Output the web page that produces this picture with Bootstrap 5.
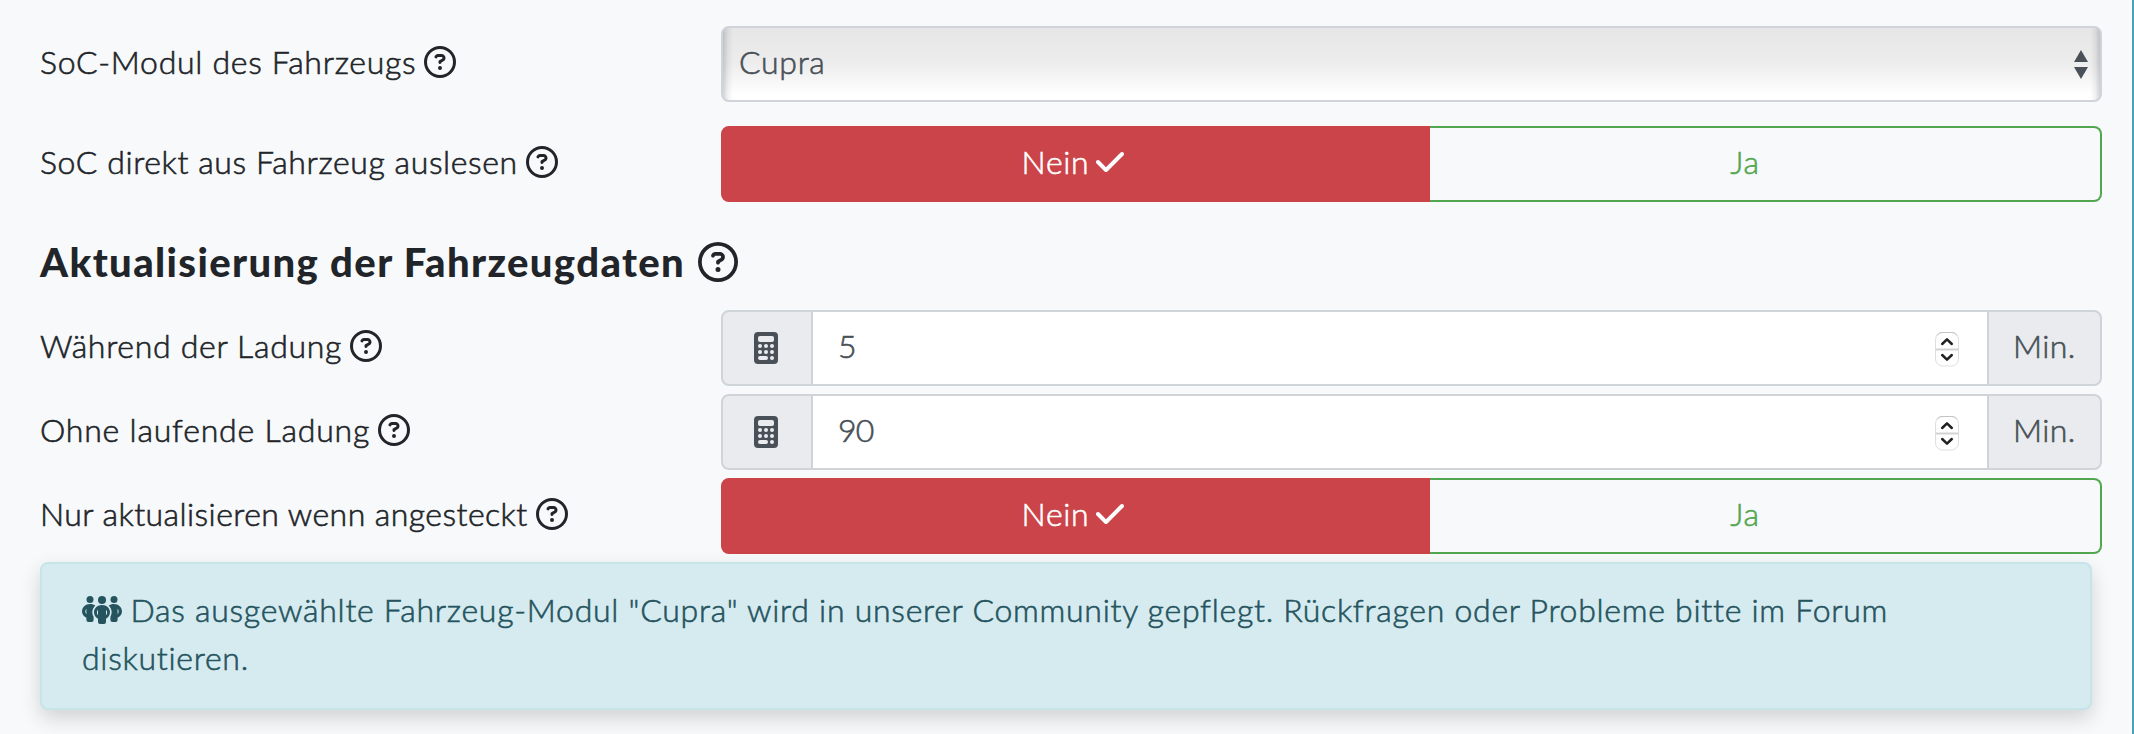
<!DOCTYPE html>
<html lang="de">
<head>
<meta charset="utf-8">
<meta name="viewport" content="width=device-width, initial-scale=1">
<title>Fahrzeug-Einstellungen</title>
<link href="https://cdn.jsdelivr.net/npm/bootstrap@5.3.0/dist/css/bootstrap.min.css" rel="stylesheet">
<style>
html, body { height: 734px; overflow: hidden; }
body {
  background: #f8f9fb;
  color: #212529;
  font: 300 32px/48px Lato, "Open Sans", sans-serif;
  letter-spacing: .7px;
  -webkit-text-stroke: .6px currentColor;
}
.settings { height: 734px; padding: 26px 30px 0 40px; border-right: 2px solid #4a9fb9; }
.setting { height: 76px; }
.setting-label { flex: 0 0 681px; padding: 12px 0 16px; white-space: nowrap; }
.label-tight { letter-spacing: .6px; }
.label-tighter { letter-spacing: .44px; }
.label-wide { letter-spacing: .8px; }
.ico { height: 32px; width: auto; fill: currentColor; flex: none; vertical-align: -4px; -webkit-text-stroke: 0; }
.setting-label .ico { margin-left: 8px; }
.setting-heading { font-size: 40px; font-weight: 900; line-height: 48px; letter-spacing: 1.38px; height: 48px; -webkit-text-stroke: 0; white-space: nowrap; }
.setting-heading .ico { height: 40px; margin-left: 13px; vertical-align: -5px; }
.form-select.module-select {
  height: 76px; font: inherit; letter-spacing: inherit; color: #495057;
  padding: 10px 40px 16px 16px; border: 2px solid #ced4da; border-radius: 8px;
  background:
    url("data:image/svg+xml,%3csvg xmlns='http://www.w3.org/2000/svg' viewBox='0 0 14 30'%3e%3cpath fill='%23495057' d='M0 12 7 0l7 12zM0 17h14L7 29z'/%3e%3c/svg%3e") right 12px top 22px / 14px 30px no-repeat,
    linear-gradient(to right, rgba(0,0,0,.17), rgba(0,0,0,.05) 5px, transparent 10px),
    linear-gradient(to left, rgba(0,0,0,.17), rgba(0,0,0,.05) 5px, transparent 10px),
    linear-gradient(#e6e6e6, #ededed 50%, #fff 92%);
}
.btn-group .btn {
  font: inherit; letter-spacing: inherit; height: 76px; padding: 10px 0 14px;
  border-width: 2px; border-radius: 8px; white-space: nowrap;
}
.btn-group .btn-no { flex: 0 0 709px; background: #cb444a; border-color: #cb444a; color: #fff; padding-right: 5px; }
.btn-group .btn-yes { flex: 1 1 0; border-color: #52a650; color: #52a650; border-left: 0; margin-left: 0 !important; padding-right: 5px; }
.btn .ico { margin-left: 7px; }
.input-group.minutes > * { font: inherit; letter-spacing: inherit; color: #495057; height: 76px; border: 2px solid #ced4d8; border-radius: 8px; margin-left: 0 !important; }
.minutes .addon-calc { width: 92px; background: #e9ebef; justify-content: center; padding: 0 2px 0 0; }
.input-group.minutes .value-box { border-left: 0; border-right: 0; padding: 10px 28px 14px 25px; background: #fff; }
.minutes .addon-unit { width: 115px; background: #e9ebef; padding: 10px 0 14px 24px; letter-spacing: .4px; }
.spinner-arrows { width: 28px; height: 38px; margin: 8px -2px 0 0; }
.community {
  width: 2052px; height: 148px; margin: 8px 0 0; padding: 22px 40px 24px;
  background: #d6ebef; border: 2px solid #c6e5ea; border-radius: 8px; color: #25545f;
  letter-spacing: .73px;
  box-shadow: 0 8px 20px rgba(0,0,0,.16);
}
.community .ico { height: 32px; width: 40px; margin-right: -1px; }
</style>
</head>
<body>
<svg class="d-none" xmlns="http://www.w3.org/2000/svg">
  <symbol id="help" viewBox="0 0 512 512"><path d="M464 256A208 208 0 1 0 48 256a208 208 0 1 0 416 0zM0 256a256 256 0 1 1 512 0A256 256 0 1 1 0 256zm169.800-90.700c7.900-22.300 29.100-37.300 52.800-37.300h58.300c34.900 0 63.100 28.300 63.100 63.100c0 22.600-12.100 43.500-31.700 54.800L280 264.400c-.2 13-10.900 23.600-24 23.600c-13.300 0-24-10.700-24-24V250.500c0-8.600 4.600-16.500 12.100-20.800l44.300-25.400c4.700-2.700 7.600-7.700 7.600-13.100c0-8.400-6.800-15.100-15.100-15.100H222.600c-3.400 0-6.400 2.100-7.500 5.300l-.4 1.200c-4.400 12.500-18.200 19-30.600 14.600s-19-18.200-14.600-30.600l.4-1.200zM224 352a32 32 0 1 1 64 0 32 32 0 1 1-64 0z"/></symbol>
  <symbol id="check" viewBox="0 0 448 512"><path d="M438.600 105.400c12.500 12.500 12.500 32.800 0 45.300l-256 256c-12.500 12.500-32.800 12.500-45.300 0l-128-128c-12.500-12.500-12.500-32.800 0-45.300s32.800-12.500 45.300 0L160 338.700 393.400 105.400c12.500-12.500 32.800-12.500 45.300 0z"/></symbol>
  <symbol id="calc" viewBox="0 0 24 32"><rect width="24" height="32" rx="4"/><g fill="#e9ebef"><rect x="4" y="4" width="16" height="6" rx="2"/><circle cx="6" cy="14" r="2"/><circle cx="12" cy="14" r="2"/><circle cx="18" cy="14" r="2"/><circle cx="6" cy="20" r="2"/><circle cx="12" cy="20" r="2"/><circle cx="18" cy="20" r="2"/><rect x="4" y="24" width="10" height="4" rx="2"/><circle cx="18" cy="26" r="2"/></g></symbol>
  <symbol id="people" viewBox="0 0 40 32"><circle cx="8" cy="5.500" r="3.500"/><circle cx="32" cy="5.500" r="3.500"/><circle cx="20" cy="6" r="4"/><path fill-rule="evenodd" d="M8 10c2.200 0 4 .5 5.300 1.600-3 3-4 7.400-1.700 11.200V26a2 2 0 0 1-2 2H6.400a2 2 0 0 1-2-2v-2.300C1.500 22.300 0 20 0 17.500 0 13.400 3.500 10 8 10zM4.400 14.800c-1.400 1.500-1.400 3.900 0 5.400z"/><path fill-rule="evenodd" d="M32 10c-2.200 0-4 .5-5.300 1.600 3 3 4 7.400 1.700 11.200V26a2 2 0 0 0 2 2h3.200a2 2 0 0 0 2-2v-2.300c2.900-1.400 4.400-3.700 4.400-6.200C40 13.400 36.500 10 32 10zm3.600 4.800c1.400 1.500 1.400 3.900 0 5.400z"/><path fill-rule="evenodd" d="M20 11c4.600 0 8 3.100 8 7.300 0 2.700-1.500 5-4 6.400V28a2 2 0 0 1-2 2h-4a2 2 0 0 1-2-2v-3.300c-2.500-1.400-4-3.700-4-6.400 0-4.200 3.400-7.300 8-7.300zm-4 4.800c-1.500 1.500-1.500 4 0 5.500zm8 0v5.500c1.500-1.500 1.500-4 0-5.500z"/></symbol>
  <symbol id="spin" viewBox="0 0 28 38"><rect x="2.500" y="2.500" width="23" height="33.500" rx="7" fill="#fff" stroke="#dedede"/><path d="M4 5.500C5 3.500 7 2.500 9 2.500h10c2 0 4 1 5 3" fill="none" stroke="#c4c4c4"/><path d="M2.500 19.500h23" stroke="#d2d2d2" stroke-width="2"/><path d="M9.200 14 14 9.400l4.800 4.600M9.200 25l4.800 4.600 4.800-4.600" fill="none" stroke="#212121" stroke-width="2.500" stroke-linecap="round" stroke-linejoin="round"/></symbol>
</svg>

<main class="settings">
  <div class="setting d-flex">
    <label class="setting-label" for="module">SoC-Modul des Fahrzeugs<svg class="ico" viewBox="0 0 512 512"><use href="#help"/></svg></label>
    <select class="form-select module-select" id="module"><option>Cupra</option></select>
  </div>

  <div class="setting d-flex mt-4">
    <div class="setting-label label-tight">SoC direkt aus Fahrzeug auslesen<svg class="ico" viewBox="0 0 512 512"><use href="#help"/></svg></div>
    <div class="btn-group flex-fill">
      <button type="button" class="btn btn-no">Nein<svg class="ico" viewBox="0 0 448 512"><use href="#check"/></svg></button>
      <button type="button" class="btn btn-yes">Ja<svg class="ico invisible" viewBox="0 0 448 512"><use href="#check"/></svg></button>
    </div>
  </div>

  <h2 class="setting-heading" style="margin:36px 0 24px">Aktualisierung der Fahrzeugdaten<svg class="ico" viewBox="0 0 512 512"><use href="#help"/></svg></h2>

  <div class="setting d-flex">
    <div class="setting-label">Während der Ladung<svg class="ico" viewBox="0 0 512 512"><use href="#help"/></svg></div>
    <div class="input-group minutes flex-nowrap">
      <span class="input-group-text addon-calc"><svg class="ico" viewBox="0 0 24 32"><use href="#calc"/></svg></span>
      <div class="form-control value-box d-flex justify-content-between"><span>5</span><svg class="spinner-arrows" viewBox="0 0 28 38"><use href="#spin"/></svg></div>
      <span class="input-group-text addon-unit">Min.</span>
    </div>
  </div>

  <div class="setting d-flex mt-2">
    <div class="setting-label label-wide">Ohne laufende Ladung<svg class="ico" viewBox="0 0 512 512"><use href="#help"/></svg></div>
    <div class="input-group minutes flex-nowrap">
      <span class="input-group-text addon-calc"><svg class="ico" viewBox="0 0 24 32"><use href="#calc"/></svg></span>
      <div class="form-control value-box d-flex justify-content-between"><span style="letter-spacing:-.8px">90</span><svg class="spinner-arrows" viewBox="0 0 28 38"><use href="#spin"/></svg></div>
      <span class="input-group-text addon-unit">Min.</span>
    </div>
  </div>

  <div class="setting d-flex mt-2">
    <div class="setting-label label-tighter">Nur aktualisieren wenn angesteckt<svg class="ico" viewBox="0 0 512 512"><use href="#help"/></svg></div>
    <div class="btn-group flex-fill">
      <button type="button" class="btn btn-no">Nein<svg class="ico" viewBox="0 0 448 512"><use href="#check"/></svg></button>
      <button type="button" class="btn btn-yes">Ja<svg class="ico invisible" viewBox="0 0 448 512"><use href="#check"/></svg></button>
    </div>
  </div>

  <div class="alert community" role="alert"><svg class="ico" viewBox="0 0 40 32"><use href="#people"/></svg> Das ausgewählte Fahrzeug-Modul "Cupra" wird in unserer Community gepflegt. Rückfragen oder Probleme bitte im Forum diskutieren.</div>
</main>
<script src="https://cdn.jsdelivr.net/npm/bootstrap@5.3.0/dist/js/bootstrap.bundle.min.js"></script>
</body>
</html>
